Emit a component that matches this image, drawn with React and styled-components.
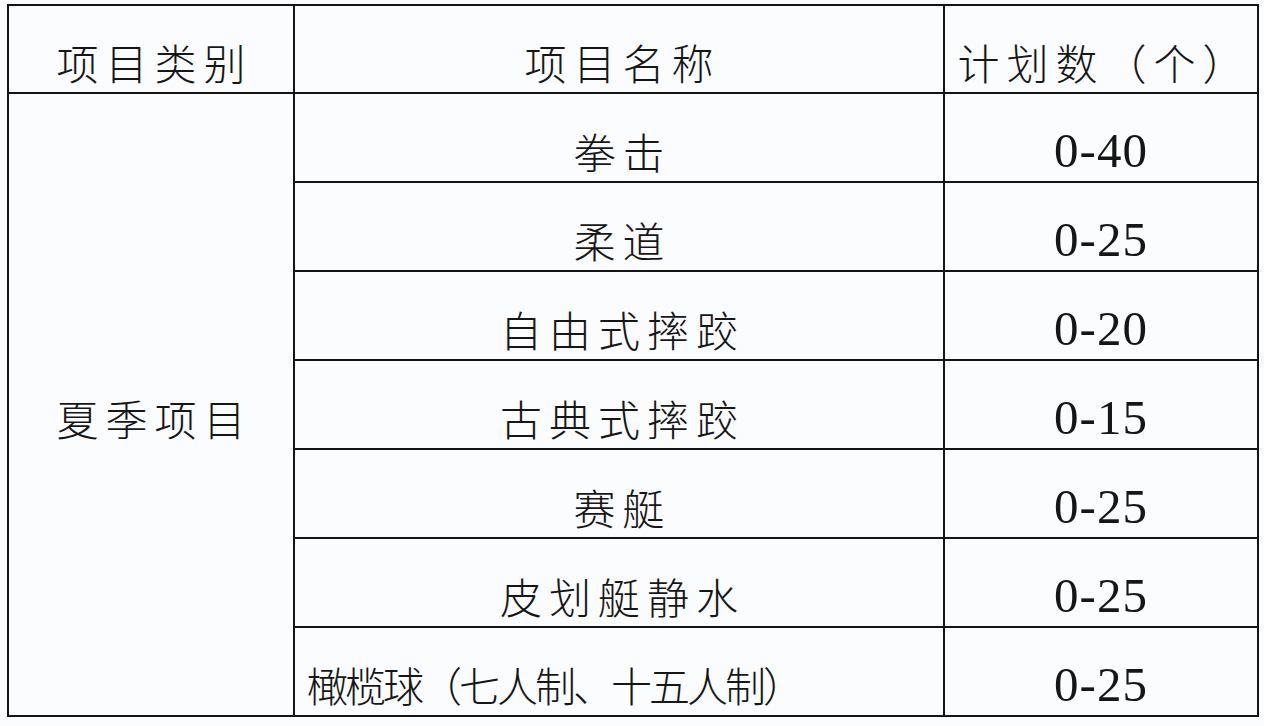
import React from 'react';
import styled, { createGlobalStyle } from 'styled-components';

const GlobalStyle = createGlobalStyle`
  html, body {
    margin: 0;
    padding: 0;
    background: #fbfcfd;
  }
  body {
    font-family: "Noto Sans CJK SC", sans-serif;
    color: #161616;
  }
`;

const Page = styled.div`
  width: 1264px;
  height: 726px;
  padding: 4px 0 0 7px;
  box-sizing: border-box;
  overflow: hidden;
`;

const Table = styled.table`
  border-collapse: collapse;
  table-layout: fixed;
  width: 1250px;
`;

const Cell = styled.td`
  border: 2px solid #141414;
  height: ${({ $head }) => ($head ? 88 : 89)}px;
  box-sizing: border-box;
  padding: 26px 0 0 ${({ $tight }) => ($tight ? 12 : 7)}px;
  text-align: ${({ $tight }) => ($tight ? 'left' : 'center')};
  vertical-align: middle;
  font-family: "Noto Sans CJK SC", sans-serif;
  font-weight: 300;
  font-size: ${({ $tight }) => ($tight ? 41 : 42)}px;
  line-height: 1;
  letter-spacing: ${({ $tight }) => ($tight ? '-3px' : '7px')};
  white-space: nowrap;
`;

const Num = styled(Cell)`
  font-family: "Liberation Serif", "Times New Roman", serif;
  font-weight: 400;
  font-size: 49px;
  letter-spacing: 1px;
  padding-left: 0;
  text-align: center;
`;

const rows = [
  { name: '拳击', plan: '0-40' },
  { name: '柔道', plan: '0-25' },
  { name: '自由式摔跤', plan: '0-20' },
  { name: '古典式摔跤', plan: '0-15' },
  { name: '赛艇', plan: '0-25' },
  { name: '皮划艇静水', plan: '0-25' },
  { name: '橄榄球（七人制、十五人制）', plan: '0-25', tight: true },
];

export default function App() {
  return (
    <>
      <GlobalStyle />
      <Page>
        <Table>
          <colgroup>
            <col style={{ width: 286 }} />
            <col style={{ width: 650 }} />
            <col style={{ width: 314 }} />
          </colgroup>
          <thead>
            <tr>
              <Cell as="th" $head>项目类别</Cell>
              <Cell as="th" $head>项目名称</Cell>
              <Cell as="th" $head>计划数（个）</Cell>
            </tr>
          </thead>
          <tbody>
            {rows.map((row, i) => (
              <tr key={row.name}>
                {i === 0 && <Cell rowSpan={rows.length}>夏季项目</Cell>}
                <Cell $tight={row.tight}>{row.name}</Cell>
                <Num>{row.plan}</Num>
              </tr>
            ))}
          </tbody>
        </Table>
      </Page>
    </>
  );
}
